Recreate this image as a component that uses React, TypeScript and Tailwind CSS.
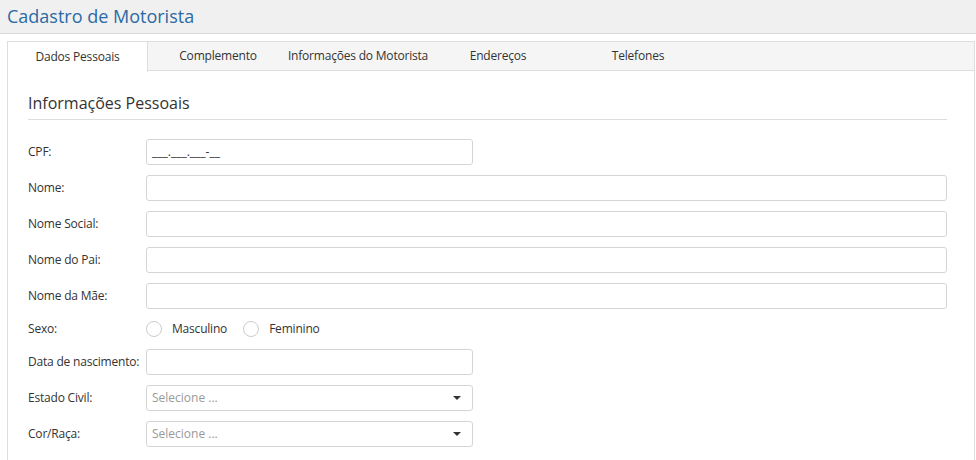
const font = { fontFamily: '"Open Sans", "Noto Sans", sans-serif' }

const tabs = ['Dados Pessoais', 'Complemento', 'Informações do Motorista', 'Endereços', 'Telefones']

function Row({ label, children, h = 'h-[36px]' }: { label: string; children: React.ReactNode; h?: string }) {
  return (
    <div className={`flex items-center ${h}`}>
      <div className="w-[118px] shrink-0 text-[12px] tracking-[-0.2px] text-[#333] whitespace-nowrap">{label}</div>
      {children}
    </div>
  )
}

function Input({ wide, value }: { wide?: boolean; value?: string }) {
  return (
    <div className={`h-[26px] border border-[#d5d5d5] rounded-[3px] bg-white flex items-center px-[5px] text-[12px] text-[#333] ${wide ? 'flex-1' : 'w-[327px]'}`}>
      {value}
    </div>
  )
}

function Select() {
  return (
    <div className="h-[26px] w-[327px] border border-[#d5d5d5] rounded-[3px] bg-white flex items-center justify-between px-[5px] text-[12px] text-[#999]">
      <span>Selecione ...</span>
      <span className="mr-[6px] w-0 h-0 border-l-[4px] border-r-[4px] border-t-[4px] border-l-transparent border-r-transparent border-t-[#333]" />
    </div>
  )
}

function Radio({ label }: { label: string }) {
  return (
    <div className="flex items-center mr-[16px]">
      <span className="w-[16px] h-[16px] rounded-full border border-[#ccc] bg-white mr-[10px]" />
      <span className="text-[12px] tracking-[-0.2px] text-[#333]">{label}</span>
    </div>
  )
}

export default function App() {
  return (
    <div className="w-[976px] h-[460px] bg-white overflow-hidden" style={font}>
      <div className="h-[34px] bg-[#f0f0f0] border-b border-[#d8d8d8] flex items-center px-[7px]">
        <h1 className="text-[18px] text-[#2b6aa5]">Cadastro de Motorista</h1>
      </div>
      <div className="mt-[7px] ml-[7px] mr-[1px] border border-[#ddd] border-b-0 h-[420px]">
        <div className="flex h-[29px] bg-[#f5f5f5] border-b border-[#ddd]">
          {tabs.map((t, i) => (
            <div
              key={t}
              className={`w-[140px] flex items-center justify-center text-[12px] tracking-[-0.2px] whitespace-nowrap text-[#333] ${i === 0 ? 'bg-white border-r border-[#ddd] h-[30px]' : ''}`}
            >
              {t}
            </div>
          ))}
        </div>
        <div className="px-[20px] pr-[27px]">
          <h2 className="mt-[20px] text-[16px] text-[#333] pb-[4px] border-b border-[#ddd]">Informações Pessoais</h2>
          <div className="mt-[14px]">
            <Row label="CPF:"><Input value="___.___.___-__" /></Row>
            <Row label="Nome:"><Input wide /></Row>
            <Row label="Nome Social:"><Input wide /></Row>
            <Row label="Nome do Pai:"><Input wide /></Row>
            <Row label="Nome da Mãe:"><Input wide /></Row>
            <Row label="Sexo:" h="h-[30px]"><Radio label="Masculino" /><Radio label="Feminino" /></Row>
            <Row label="Data de nascimento:"><Input /></Row>
            <Row label="Estado Civil:"><Select /></Row>
            <Row label="Cor/Raça:"><Select /></Row>
          </div>
        </div>
      </div>
    </div>
  )
}
